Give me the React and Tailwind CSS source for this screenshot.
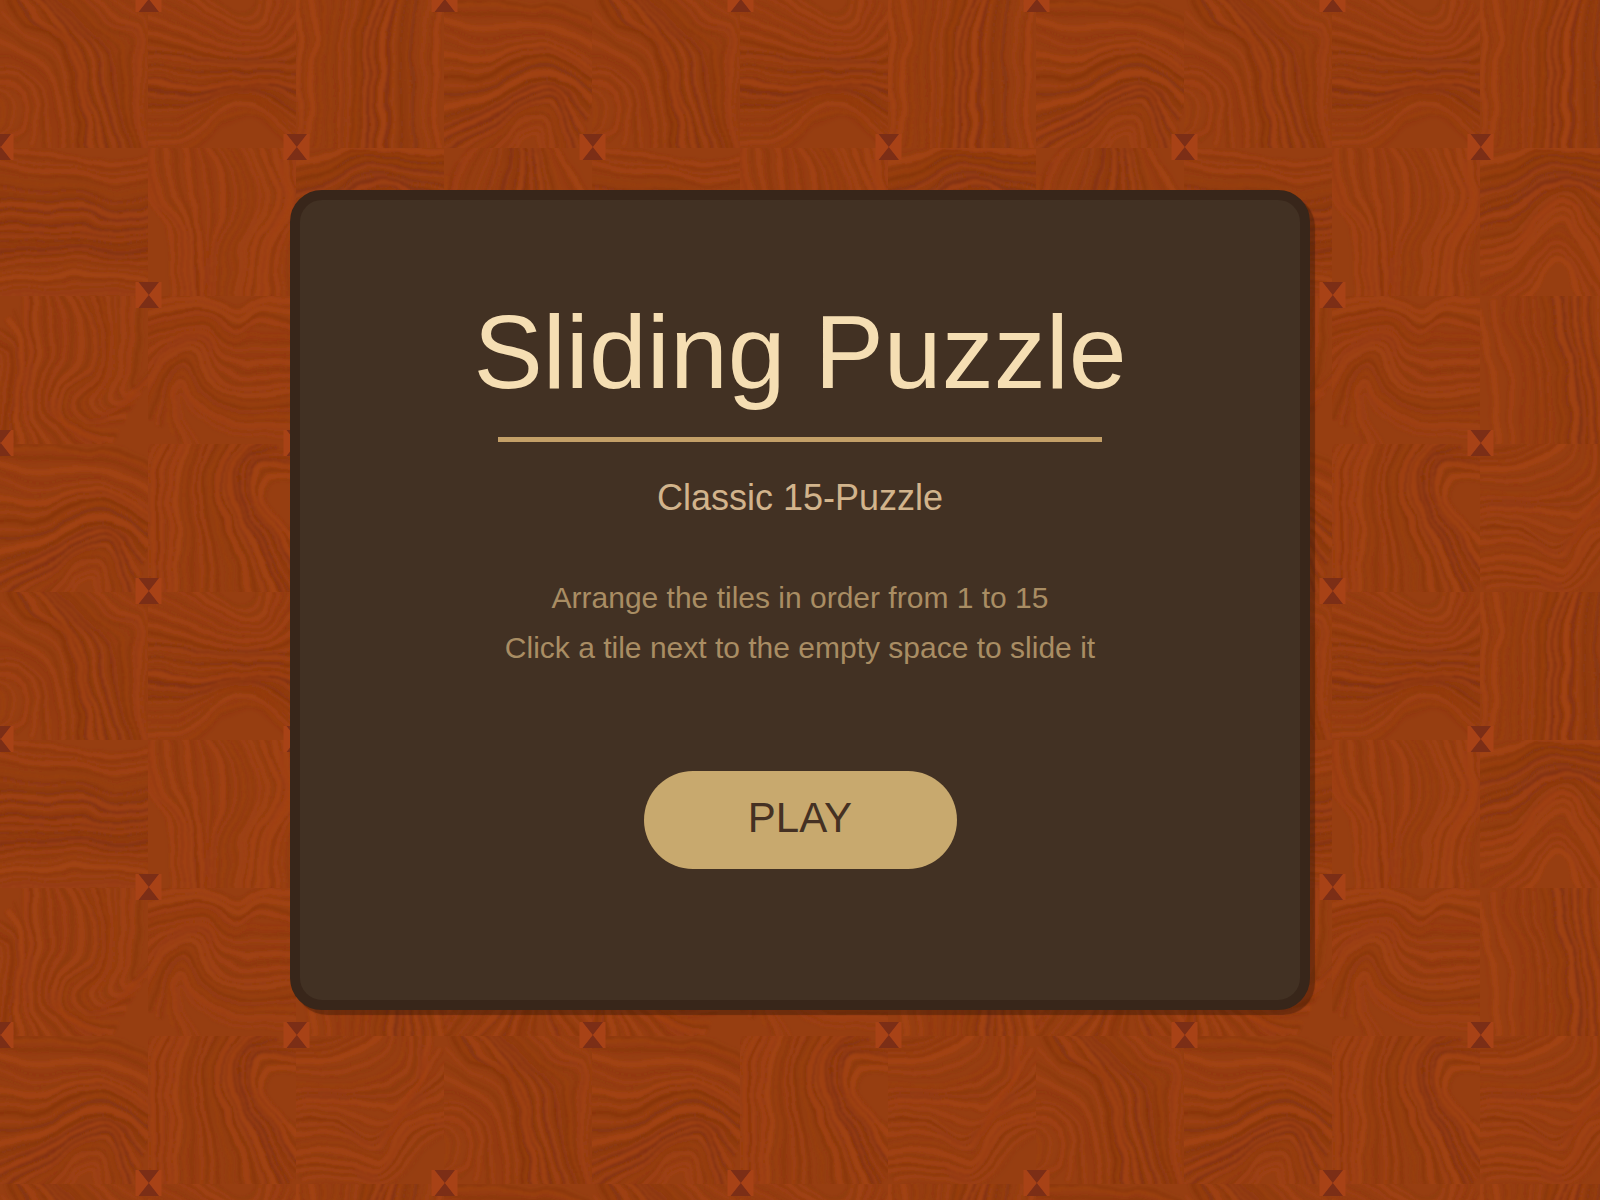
import React from 'react';

const TILE = 148;
const REPEAT = TILE * 4;

// Each block is a list of guide lines: [darkness, x1, y1, x2, y2, ...].
// The grain between two neighbouring guides is interpolated.
const BLOCKS = [
    // row 1
    [
        [0, -30, 95, -12, 100, -8, 110, -12, 125, -30, 140],
        [0.1, -8, 84, 18, 90, 26, 112, 20, 132, -5, 142],
        [0.2, -8, 64, 22, 68, 46, 86, 52, 116, 58, 154],
        [0.6, 8, -8, 24, 22, 58, 36, 74, 84, 82, 154],
        [1, 34, -8, 58, 20, 80, 50, 90, 94, 110, 154],
        [0.8, 48, -8, 82, 28, 112, 54, 116, 96, 132, 154],
        [0.1, 80, -8, 112, 22, 138, 34, 134, 84, 144, 154],
        [0, 110, -8, 140, 6, 150, 28, 148, 84, 152, 154]
    ],
    [
        [0, 60, -12, 75, 4, 95, 12, 106, 6, 108, -12],
        [0.1, 26, -8, 58, 16, 92, 32, 122, 26, 130, -8],
        [0.2, -5, 22, 38, 36, 84, 52, 124, 48, 154, 18],
        [0.9, -5, 56, 40, 60, 84, 66, 120, 66, 154, 64],
        [1, -5, 88, 40, 92, 80, 86, 120, 84, 154, 92],
        [0.5, -5, 108, 30, 110, 66, 98, 104, 92, 154, 118],
        [0, -5, 137, 28, 138, 64, 112, 104, 100, 154, 138],
        [0.3, -5, 158, 34, 158, 74, 128, 108, 118, 146, 154]
    ],
    [
        [0, -2, -6, 0, 40, -2, 80, 2, 120, 0, 154],
        [0.1, 14, -6, 20, 40, 12, 80, 14, 114, 4, 154],
        [0.3, 46, -6, 38, 40, 36, 80, 40, 116, 36, 154],
        [0.5, 72, -6, 62, 34, 62, 76, 58, 110, 56, 154],
        [1, 92, -6, 78, 34, 78, 76, 78, 110, 78, 154],
        [0.7, 116, -6, 110, 40, 110, 76, 108, 110, 112, 154],
        [0.1, 150, -6, 144, 40, 144, 80, 145, 110, 148, 154]
    ],
    [
        [0.3, -5, 0, 40, -4, 88, 2, 120, 2, 154, 20],
        [0.1, -5, 26, 34, 42, 78, 36, 116, 40, 154, 66],
        [0.6, -5, 76, 34, 76, 76, 58, 112, 56, 154, 82],
        [0.8, -5, 122, 34, 112, 68, 92, 106, 80, 150, 110],
        [0.8, 0, 150, 46, 124, 78, 106, 112, 96, 132, 154],
        [0.1, 40, 158, 66, 132, 84, 118, 102, 120, 112, 156],
        [0, 70, 164, 80, 144, 88, 138, 94, 140, 98, 160]
    ],
    // row 2
    [
        [0, -5, -6, 40, 0, 76, 6, 112, 10, 154, 4],
        [0.2, -5, 12, 38, 22, 74, 24, 112, 30, 154, 28],
        [0.8, -5, 46, 40, 50, 80, 48, 116, 62, 154, 54],
        [1, -5, 80, 40, 78, 80, 78, 118, 84, 154, 78],
        [0.9, -5, 103, 40, 100, 80, 98, 118, 104, 154, 100],
        [0, -5, 122, 40, 118, 80, 116, 118, 120, 154, 120],
        [0.1, -5, 142, 40, 140, 80, 138, 118, 138, 154, 144],
        [0, -5, 154, 40, 152, 80, 150, 118, 150, 154, 152]
    ],
    [
        [0, -8, 10, 0, 50, 16, 85, 20, 120, 18, 154],
        [0.4, 4, -4, 8, 46, 32, 76, 38, 112, 38, 154],
        [0.2, 40, -6, 46, 34, 50, 66, 54, 106, 56, 154],
        [0.3, 66, -4, 82, 28, 84, 58, 68, 104, 66, 154],
        [0, 82, -6, 102, 28, 106, 60, 88, 98, 86, 154],
        [0.3, 110, -6, 126, 30, 130, 60, 104, 98, 100, 154],
        [0.1, 138, -6, 142, 30, 144, 60, 124, 98, 120, 154],
        [0.1, 154, -6, 156, 30, 156, 60, 146, 98, 142, 154]
    ],
    [
        [0.1, -5, 6, 30, 0, 60, -6, 104, -4, 154, -2],
        [0.7, -5, 38, 34, 26, 68, 10, 106, 14, 154, 20],
        [0.7, -5, 66, 32, 54, 66, 32, 104, 32, 154, 48],
        [0.6, -5, 96, 32, 86, 60, 58, 94, 48, 136, 112],
        [0, -5, 116, 32, 112, 56, 80, 86, 66, 122, 130],
        [0.2, 2, 154, 38, 128, 56, 106, 84, 94, 124, 150],
        [0, 36, 160, 54, 142, 64, 124, 84, 116, 104, 158]
    ],
    [
        [0.1, -8, 40, -6, 50, -8, 100, -10, 154],
        [0.2, 36, -6, 20, 14, 4, 60, -2, 154],
        [0.8, 66, -6, 58, 30, 40, 90, 34, 154],
        [1, 82, -6, 84, 30, 84, 90, 84, 154],
        [0.5, 96, -6, 108, 30, 122, 90, 126, 154],
        [0, 116, -6, 140, 30, 152, 70, 156, 154]
    ],
    // row 3
    [
        [0, -20, 50, -6, 60, -6, 80, -8, 100, -8, 125, -10, 154],
        [0.4, -8, 44, 14, 56, 14, 76, 10, 98, 6, 124, 4, 154],
        [0.2, 30, -6, 28, 30, 34, 56, 26, 86, 28, 118, 40, 154],
        [0.2, 54, -6, 62, 30, 62, 60, 48, 84, 50, 116, 92, 150],
        [0.3, 76, -6, 96, 36, 92, 72, 64, 94, 64, 126, 114, 146],
        [0.3, 96, -6, 108, 36, 106, 76, 82, 108, 92, 124, 134, 108],
        [0, 120, -6, 120, 36, 116, 76, 102, 104, 118, 110, 150, 84],
        [0.4, 140, -6, 140, 30, 138, 60, 132, 86, 138, 90, 154, 66]
    ],
    [
        [0, -5, 4, 26, -2, 60, 0, 90, 8, 118, -2, 154, -6],
        [0.3, -5, 28, 28, 18, 60, 18, 88, 34, 116, 18, 154, 36],
        [0.4, -5, 48, 24, 38, 58, 34, 78, 56, 104, 60, 154, 56],
        [0.1, -5, 92, 16, 58, 52, 44, 68, 76, 96, 90, 154, 84],
        [0.3, -5, 118, 16, 78, 40, 62, 56, 90, 88, 110, 154, 104],
        [0.3, 34, 152, 22, 100, 32, 82, 48, 104, 84, 126, 154, 126],
        [0, 56, 156, 34, 112, 34, 102, 48, 118, 80, 138, 154, 144]
    ],
    [
        [0, -8, 20, 0, 60, 4, 100, 8, 154],
        [0.1, 28, -6, 26, 26, 46, 66, 44, 154],
        [0.4, 58, -6, 62, 30, 72, 70, 78, 154],
        [1, 82, -6, 86, 36, 98, 76, 104, 154],
        [0.6, 108, -6, 110, 36, 118, 76, 124, 154],
        [0.1, 148, -6, 146, 36, 148, 76, 152, 154]
    ],
    [
        [0, -8, -6, -6, 50, 0, 110, 20, 118],
        [0.3, 24, -6, 20, 60, 10, 120, -10, 150],
        [0.8, 60, -6, 66, 60, 60, 116, 30, 156],
        [1, 84, -6, 84, 60, 84, 116, 82, 156],
        [0.5, 106, -6, 104, 60, 112, 116, 140, 156],
        [0, 150, -6, 150, 60, 148, 110, 160, 140]
    ],
    // row 4
    null,
    [
        [0.1, 8, -6, -4, 25, -6, 55, -6, 90, -4, 154],
        [0.3, 28, -6, 12, 25, 10, 55, 10, 90, 10, 154],
        [0, 44, -6, 34, 25, 30, 58, 34, 94, 26, 154],
        [0.4, 66, -6, 52, 26, 52, 60, 58, 100, 62, 154],
        [0.6, 88, -6, 72, 26, 74, 60, 92, 104, 108, 154],
        [0.9, 122, -4, 90, 18, 90, 56, 110, 92, 136, 154],
        [0.8, 154, 24, 112, 14, 102, 46, 122, 84, 154, 130],
        [0, 154, 40, 126, 38, 120, 56, 132, 76, 154, 92]
    ],
    [
        [0.2, -5, 4, 20, 4, 40, 0, 52, -6, 60, -14],
        [0, -5, 24, 36, 22, 60, 14, 76, 2, 84, -8],
        [0.2, -5, 50, 44, 52, 86, 42, 110, 22, 112, -8],
        [0.1, -5, 66, 50, 62, 100, 66, 128, 42, 130, -8],
        [0.3, -5, 84, 40, 82, 76, 104, 106, 78, 154, 30],
        [0, -5, 108, 44, 104, 82, 120, 106, 84, 154, 66],
        [0.3, -5, 128, 46, 128, 84, 138, 114, 96, 154, 84],
        [0, 10, 156, 60, 150, 100, 150, 136, 112, 156, 100]
    ],
    null
];
// these blocks are cut from the same veneer as two in the first row
BLOCKS[12] = BLOCKS[3];
BLOCKS[15] = BLOCKS[0];

const noise = (n) => {
    const v = Math.sin(n * 127.1 + 11.7) * 43758.5453;
    return v - Math.floor(v);
};

const smoothPath = (pts) => {
    const at = (i) => {
        const k = Math.max(0, Math.min(pts.length / 2 - 1, i));
        return [pts[k * 2], pts[k * 2 + 1]];
    };
    let d = `M${pts[0].toFixed(1)} ${pts[1].toFixed(1)}`;
    for (let i = 0; i < pts.length / 2 - 1; i++) {
        const [p0, p1, p2, p3] = [at(i - 1), at(i), at(i + 1), at(i + 2)];
        const c1 = [p1[0] + (p2[0] - p0[0]) / 6, p1[1] + (p2[1] - p0[1]) / 6];
        const c2 = [p2[0] - (p3[0] - p1[0]) / 6, p2[1] - (p3[1] - p1[1]) / 6];
        d += `C${[...c1, ...c2, ...p2].map((v) => v.toFixed(1)).join(' ')}`;
    }
    return d;
};

const STEPS = 5;
const BAND = 10;

const buildGrain = (guides, seed) => {
    const lines = [];
    for (let g = 0; g < guides.length - 1; g++) {
        for (let s = 0; s < STEPS; s++) {
            const n = g * STEPS + s;
            const t = (s + noise(seed * 91 + n) * 0.8) / STEPS;
            const [dark, ...pts] = guides[g].map((v, i) => v + (guides[g + 1][i] - v) * t);
            const r = noise(seed * 57 + n * 3);
            const d = smoothPath(pts);
            if (s % 2 === 0) {
                lines.push({ d, stroke: '#7a300c', width: BAND, opacity: dark * 0.2 });
            }
            if (n % 2 === 0) {
                lines.push({ d, stroke: '#7c2e0e', width: 1.6 + r * 2, opacity: 0.08 + dark * 0.4 + r * 0.14 });
            } else {
                lines.push({ d, stroke: '#aa4515', width: 2 + r * 4, opacity: 0.2 + r * 0.4 });
            }
        }
    }
    // wide soft strokes first so the fine grain stays on top
    return lines.sort((a, b) => (b.width === BAND) - (a.width === BAND));
};

const GRAIN = BLOCKS.map((guides, i) => buildGrain(guides, i === 12 ? 3 : i === 15 ? 0 : i));

const KNOTS = [];
for (let row = 0; row <= 4; row++) {
    for (let col = 0; col <= 4; col++) {
        if ((row + col) % 2 === 1) KNOTS.push([col * TILE, row * TILE]);
    }
}

const Parquet = () => (
    <svg className="absolute inset-0 h-full w-full" aria-hidden="true">
        <defs>
            <clipPath id="block">
                <rect width={TILE} height={TILE} />
            </clipPath>
            <filter id="soften" x="0" y="0" width="100%" height="100%">
                <feTurbulence type="fractalNoise" baseFrequency="0.03" numOctaves="2" seed="4" result="warp" />
                <feDisplacementMap in="SourceGraphic" in2="warp" scale="9" xChannelSelector="R" yChannelSelector="G" />
                <feGaussianBlur stdDeviation="1" />
            </filter>
            <filter id="knotSoften">
                <feGaussianBlur stdDeviation="0.7" />
            </filter>
            <pattern id="parquet" width={REPEAT} height={REPEAT} patternUnits="userSpaceOnUse">
                <rect width={REPEAT} height={REPEAT} fill="#973e11" />
                {GRAIN.map((lines, i) => (
                    <g
                        key={i}
                        transform={`translate(${(i % 4) * TILE} ${Math.floor(i / 4) * TILE})`}
                        clipPath="url(#block)"
                    >
                        <g filter="url(#soften)" fill="none">
                            {lines.map((line, j) => (
                                <path
                                    key={j}
                                    d={line.d}
                                    stroke={line.stroke}
                                    strokeWidth={line.width}
                                    strokeOpacity={line.opacity}
                                />
                            ))}
                        </g>
                    </g>
                ))}
                {KNOTS.map(([x, y]) => (
                    <g key={`${x}-${y}`} transform={`translate(${x} ${y - 1})`} filter="url(#knotSoften)">
                        <rect x="-12.5" y="-13" width="26" height="26" fill="#a84317" />
                        <path d="M-9.5 -13H11L0.8 0ZM-9.5 13H11L0.8 0Z" fill="#7c2d14" />
                    </g>
                ))}
            </pattern>
        </defs>
        <rect width="100%" height="100%" fill="url(#parquet)" />
    </svg>
);

const StartPanel = ({ onPlay }) => (
    <main className="relative flex w-full max-w-[1020px] flex-col items-center rounded-[32px] border-10 border-[#38261a] bg-[#423123] px-8 pt-[100px] pb-[131px] text-center shadow-[5px_5px_1px_rgba(50,20,5,0.4)]">
        <h1 className="text-[104px] leading-none text-[#f5deb3]">Sliding Puzzle</h1>
        <div className="mt-[33px] h-[5px] w-full max-w-[604px] bg-[#c4a068]" />
        <p className="mt-9 text-4xl leading-10 text-[#d2b48c]">Classic 15-Puzzle</p>
        <div className="mt-[55px] text-3xl leading-[50px] text-[#a98d63]">
            <p>Arrange the tiles in order from 1 to 15</p>
            <p>Click a tile next to the empty space to slide it</p>
        </div>
        <button
            type="button"
            onClick={onPlay}
            className="mt-[98px] h-[98px] w-full max-w-[313px] cursor-pointer rounded-full bg-[#c8a96e] pb-1 text-[42px] leading-none text-[#453123]"
        >
            PLAY
        </button>
    </main>
);

const App = () => {
    return (
        <div className="relative flex min-h-screen items-center justify-center overflow-hidden bg-[#973e11] font-['Liberation_Sans',Arial,sans-serif]">
            <Parquet />
            <StartPanel onPlay={() => {}} />
        </div>
    );
};

export default App;
